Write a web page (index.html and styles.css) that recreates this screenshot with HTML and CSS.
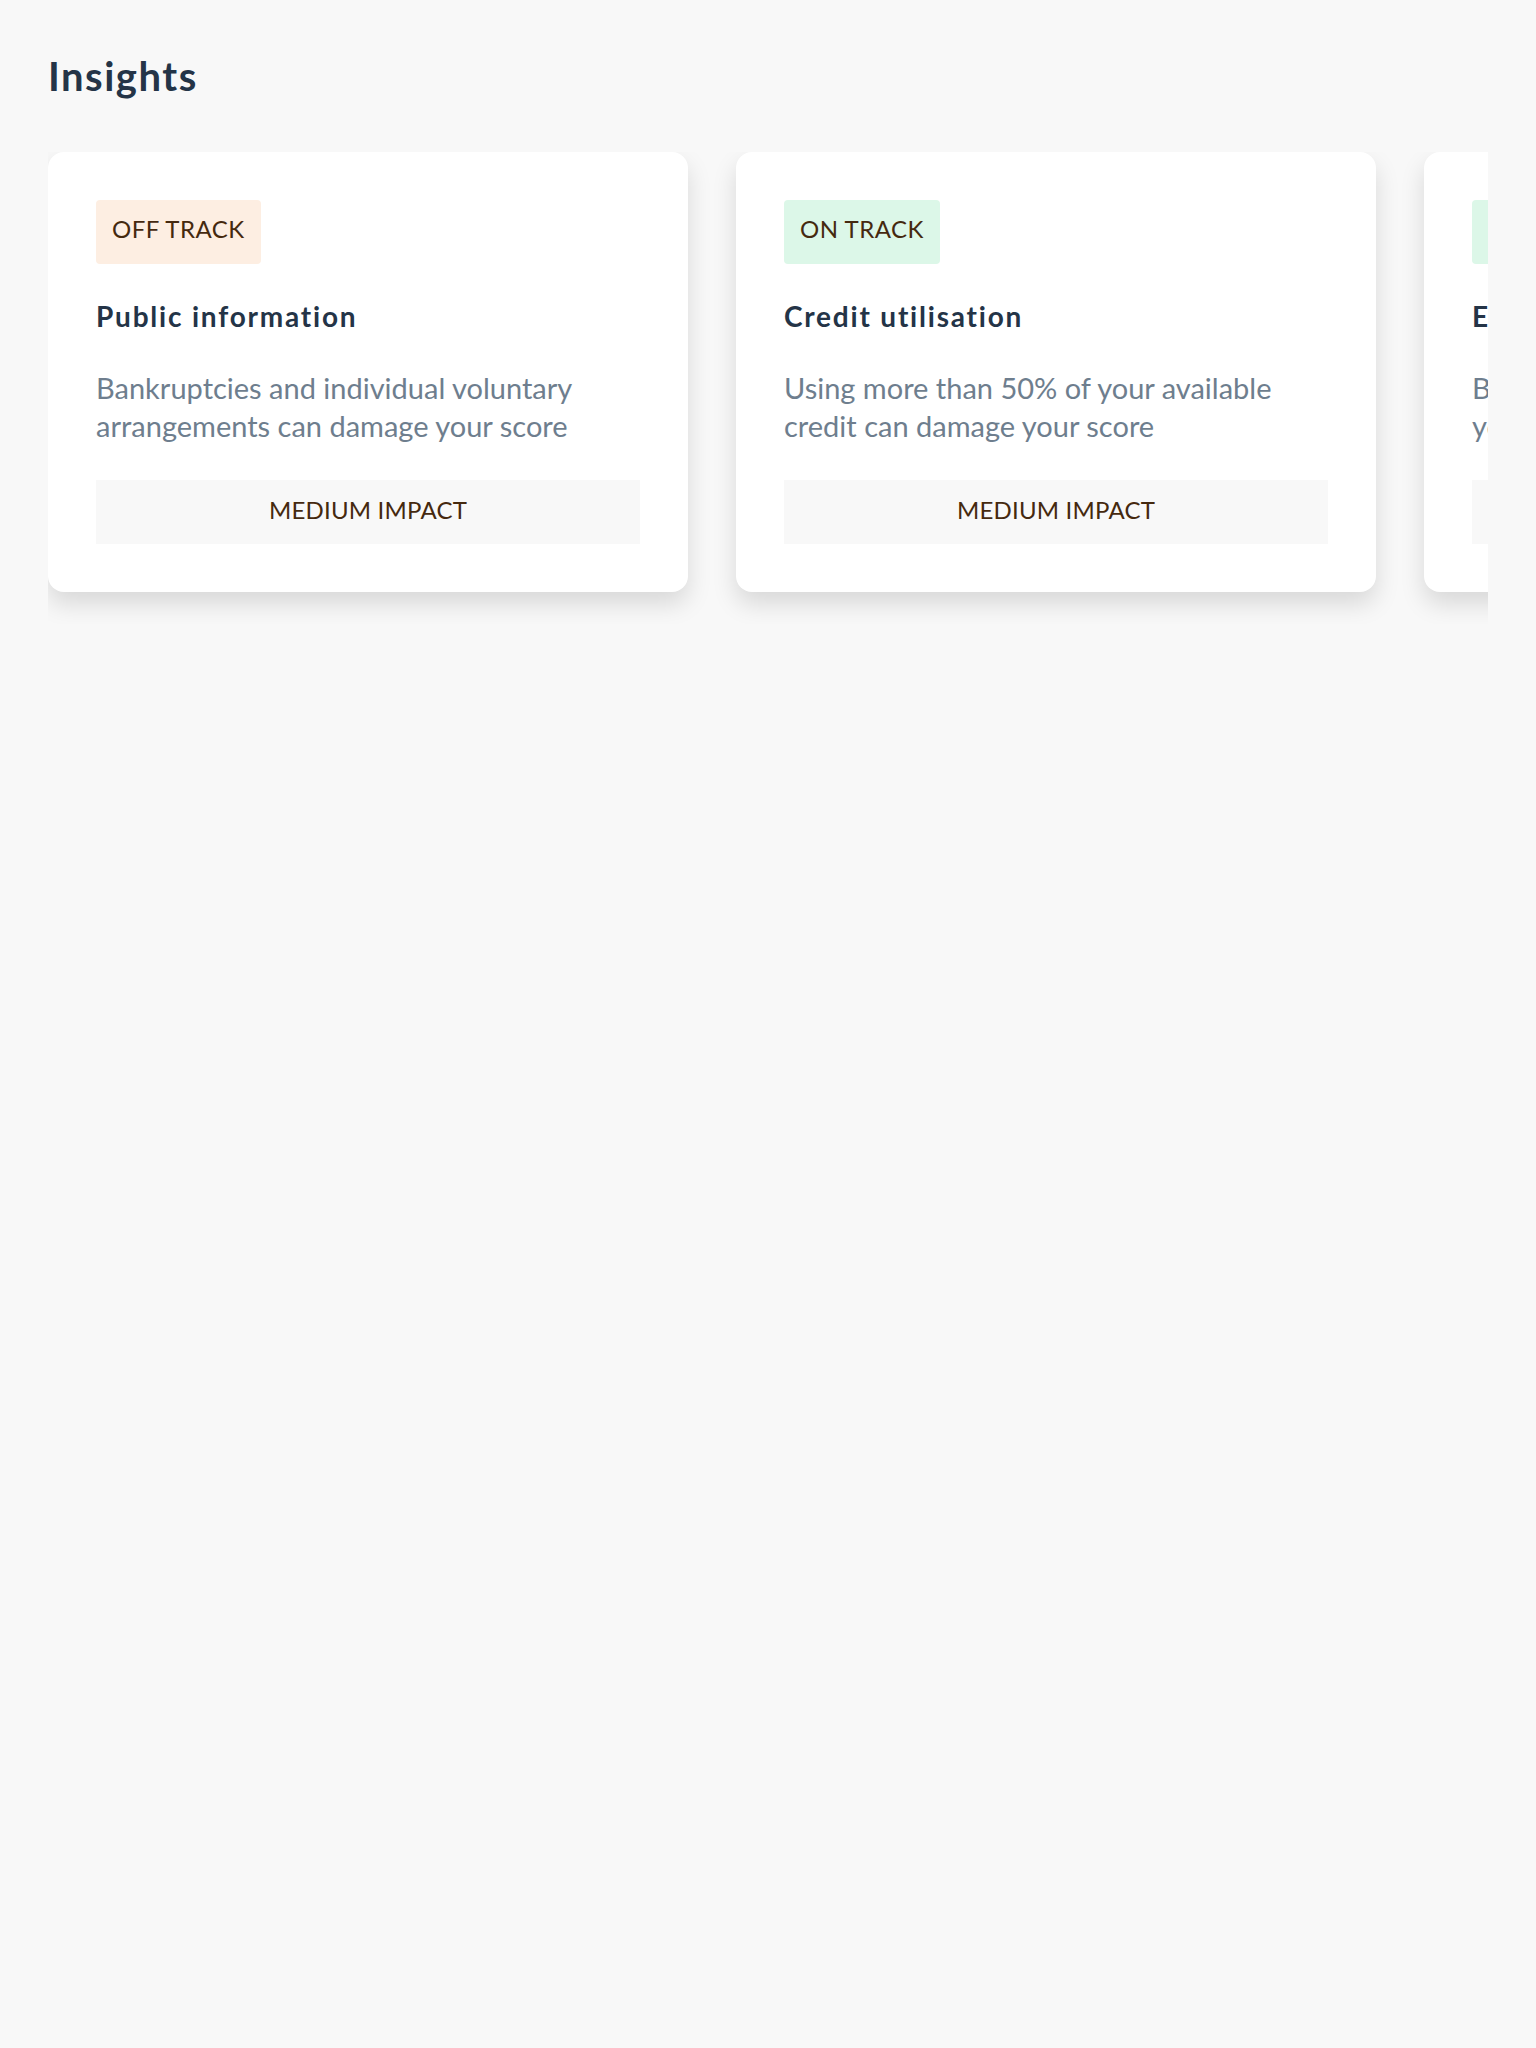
FILE: index.html
```html
<!DOCTYPE html>
<html lang="en">
<head>
<meta charset="utf-8">
<title>Insights</title>
<link rel="stylesheet" href="styles.css">
</head>
<body>
<main class="page">
  <h1 class="page-title">Insights</h1>
  <div class="scroller">
    <article class="card">
      <span class="badge badge-off">OFF TRACK</span>
      <h2 class="card-title">Public information</h2>
      <p class="card-text">Bankruptcies and individual voluntary arrangements can damage your score</p>
      <div class="impact">MEDIUM IMPACT</div>
    </article>
    <article class="card">
      <span class="badge badge-on">ON TRACK</span>
      <h2 class="card-title">Credit utilisation</h2>
      <p class="card-text">Using more than 50% of your available credit can damage your score</p>
      <div class="impact">MEDIUM IMPACT</div>
    </article>
    <article class="card">
      <span class="badge badge-on">ON TRACK</span>
      <h2 class="card-title">Electoral roll</h2>
      <p class="card-text">Being on the electoral roll can improve your score</p>
      <div class="impact">HIGH IMPACT</div>
    </article>
  </div>
</main>
</body>
</html>
```
FILE: styles.css
```css
* { box-sizing: border-box; }
html, body { margin: 0; padding: 0; }
body {
  background: #f8f8f8;
  font-family: "Lato", "Open Sans", sans-serif;
  color: #243447;
}
.page {
  padding: 48px 48px;
}
.page-title {
  margin: 0;
  font-size: 40px;
  line-height: 56px;
  font-weight: 700;
  letter-spacing: 1.5px;
  color: #243447;
}
.scroller {
  margin-top: 48px;
  display: flex;
  gap: 48px;
  overflow: hidden;
  padding-bottom: 32px;
}
.card {
  flex: 0 0 640px;
  background: #ffffff;
  border-radius: 16px;
  padding: 48px;
  box-shadow: 0 12px 24px rgba(0, 0, 0, 0.13);
  display: flex;
  flex-direction: column;
  align-items: flex-start;
}
.badge {
  display: inline-block;
  padding: 13px 16px 19px;
  font-size: 24px;
  line-height: 32px;
  letter-spacing: 0.5px;
  color: #45290f;
  border-radius: 4px;
}
.badge-off { background: #fdeee2; }
.badge-on { background: #dcf7e8; }
.card-title {
  margin: 32px 0 0;
  font-size: 28px;
  line-height: 40px;
  font-weight: 700;
  letter-spacing: 1.8px;
  color: #243447;
}
.card-text {
  margin: 33px 0 0;
  font-size: 29px;
  line-height: 38.4px;
  color: #6e7e8e;
}
.impact {
  margin-top: 34px;
  align-self: stretch;
  background: #f8f8f8;
  text-align: center;
  font-size: 24px;
  line-height: 32px;
  padding: 14px 16px 18px;
  letter-spacing: 0.2px;
  color: #45290f;
}
```
